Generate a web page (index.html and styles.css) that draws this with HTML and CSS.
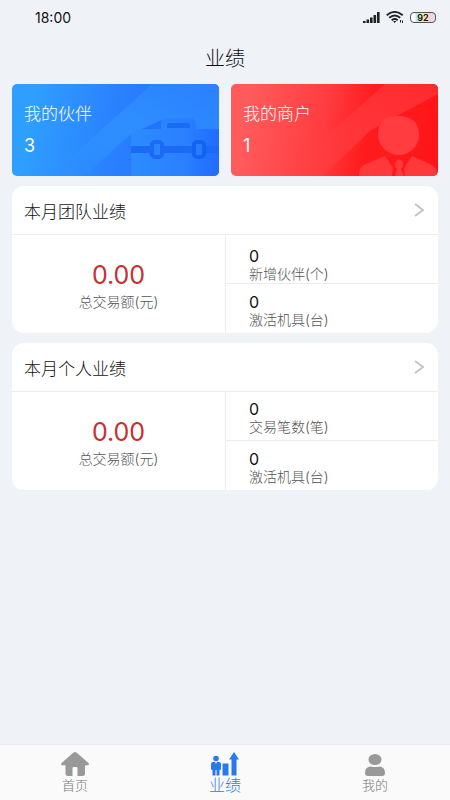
FILE: index.html
```html
<!DOCTYPE html>
<html lang="zh-CN">
<head>
    <meta charset="UTF-8">
    <meta name="viewport" content="width=device-width, initial-scale=1.0">
    <title>业绩</title>
    <link rel="stylesheet" href="styles.css">
</head>
<body>
    <div class="status-bar">
        <span class="time">18:00</span>
        <div class="status-icons">
            <svg width="17" height="11" viewBox="0 0 17 11" fill="#222">
                <rect x="0" y="9" width="2.6" height="2"/>
                <rect x="3.5" y="7.5" width="2.6" height="3.5"/>
                <rect x="7" y="5.5" width="2.6" height="5.5"/>
                <rect x="10.5" y="3" width="2.6" height="8"/>
                <rect x="14" y="0" width="2.6" height="11"/>
            </svg>
            <svg width="18" height="12" viewBox="0 0 18 12" fill="none" stroke="#222" stroke-width="1.8">
                <path d="M.7 4.2Q8.7-2.4 16.7 4.2"/>
                <path d="M3.2 6.8Q8.7 2.2 14.2 6.8"/>
                <path d="M5.7 9.2Q8.7 6.8 11.7 9.2"/>
                <path d="M7 10h3.4l-1.7 2z" fill="#222" stroke="none"/>
                <path d="M14.5 9v2.500M16.5 9.500v2.500" stroke-width="1"/>
            </svg>
            <div class="battery">92</div>
        </div>
    </div>

    <h1>业绩</h1>

    <main>
        <div class="cards">
            <a href="#" class="card card-blue">
                <svg class="card-art" viewBox="0 0 207 92" preserveAspectRatio="xMaxYMax slice">
                    <defs>
                        <linearGradient id="blue-band" x1="1" y1="0" x2="0" y2="1">
                            <stop offset="0" stop-color="#2a80ff"/>
                            <stop offset=".5" stop-color="#2f8eff"/>
                            <stop offset="1" stop-color="#2f9aff" stop-opacity="0"/>
                        </linearGradient>
                        <linearGradient id="case">
                            <stop offset="0" stop-color="#2c8cff"/>
                            <stop offset=".6" stop-color="#2a80ff"/>
                            <stop offset="1" stop-color="#206cff"/>
                        </linearGradient>
                    </defs>
                    <path d="M140 0H207V50H119L72 92H52V80z" fill="url(#blue-band)"/>
                    <path d="M130 45L152 35V45z" fill="#2173f8"/>
                    <path d="M119 92V53q0-8 8-8h22v-4q0-7 7-7h21q7 0 7 7v4h23v47z" fill="url(#case)"/>
                    <path d="M155 44v-3q0-2 2-2h18q3 0 3 3v2z" fill="#1b6cf5"/>
                    <path d="M119 62h88v7h-88z" fill="#1b6af5"/>
                    <rect x="140" y="58" width="10" height="15" rx="3" fill="#2c85ff" stroke="#1b6af5" stroke-width="4"/>
                    <rect x="182" y="58" width="10" height="15" rx="3" fill="#2a7cff" stroke="#1563f5" stroke-width="4"/>
                </svg>
                <span class="card-title">我的伙伴</span>
                <span class="card-count">3</span>
            </a>
            <a href="#" class="card card-red">
                <svg class="card-art" viewBox="0 0 207 92" preserveAspectRatio="xMaxYMax slice">
                    <defs>
                        <linearGradient id="red-band" x1="1" y1="0" x2="0" y2="1">
                            <stop offset="0" stop-color="#ff2a2d"/>
                            <stop offset=".5" stop-color="#ff3438"/>
                            <stop offset="1" stop-color="#ff4a4d" stop-opacity="0"/>
                        </linearGradient>
                    </defs>
                    <path d="M154 0H207V10L140 46L92 92H62V82z" fill="url(#red-band)"/>
                    <path d="M147 50c0-12 7-18 20-18s21 6 21 18c0 13-10 21-20 21s-21-8-21-21z" fill="#ff3c40"/>
                    <path d="M128 92v-3q0-6 7-9l19-8 8 12-1 8zM206 92v-3q0-6-7-9l-18-8-8 12 1 8z" fill="#ff383c"/>
                    <path d="M164 92l2-7q-4-4-1-8 3-3 6 0 3 4-1 8l3 7z" fill="#ff383c"/>
                </svg>
                <span class="card-title">我的商户</span>
                <span class="card-count">1</span>
            </a>
        </div>

        <section class="panel">
            <a href="#" class="panel-header">
                <h2>本月团队业绩</h2>
                <svg width="10" height="14" viewBox="0 0 10 14" fill="none" stroke="#c4c4c4" stroke-width="2"><path d="M1 1l8 6-8 6"/></svg>
            </a>
            <div class="panel-body">
                <div class="total">
                    <span class="amount">0.00</span>
                    <span class="label">总交易额(元)</span>
                </div>
                <div class="stats stats-team">
                    <div class="stat">
                        <span class="number">0</span>
                        <span class="label">新增伙伴(个)</span>
                    </div>
                    <div class="stat">
                        <span class="number">0</span>
                        <span class="label">激活机具(台)</span>
                    </div>
                </div>
            </div>
        </section>

        <section class="panel">
            <a href="#" class="panel-header">
                <h2>本月个人业绩</h2>
                <svg width="10" height="14" viewBox="0 0 10 14" fill="none" stroke="#c4c4c4" stroke-width="2"><path d="M1 1l8 6-8 6"/></svg>
            </a>
            <div class="panel-body">
                <div class="total">
                    <span class="amount">0.00</span>
                    <span class="label">总交易额(元)</span>
                </div>
                <div class="stats">
                    <div class="stat">
                        <span class="number">0</span>
                        <span class="label">交易笔数(笔)</span>
                    </div>
                    <div class="stat">
                        <span class="number">0</span>
                        <span class="label">激活机具(台)</span>
                    </div>
                </div>
            </div>
        </section>
    </main>

    <nav class="tab-bar">
        <a href="#" class="tab">
            <svg width="28" height="24" viewBox="0 0 28 24" fill="#999"><path d="M12.5.6q1.5-1.2 3 0L27.4 11q1.4 2-.8 2.3H24V21.5q0 2.5-2.5 2.5H16.500v-8q0-1-1-1h-3q-1 0-1 1v8H7q-2.5 0-2.5-2.5V13.3H1.4Q-.8 13 .6 11z"/></svg>
            <span>首页</span>
        </a>
        <a href="#" class="tab active">
            <svg width="28" height="24" viewBox="0 0 28 24" fill="#2878f0">
                <circle cx="5" cy="6.5" r="2.8"/>
                <path d="M2 10h2l1 2 1-2h2q2 0 2 2v5q0 1-1.5 1v5.5H5.500V18h-1v5.5h-3V18Q0 18 0 17v-5q0-2 2-2z"/>
                <path d="M11.5 11.5h6v12h-6zM20.5 7.5H18L23 0l5 7.5h-2.5v16h-5z"/>
            </svg>
            <span>业绩</span>
        </a>
        <a href="#" class="tab">
            <svg width="20" height="22" viewBox="0 0 20 22" fill="#999">
                <ellipse cx="10" cy="5.5" rx="6.5" ry="5.5"/>
                <path d="M0 19q0-6.5 6-6.5 4 1 8 0 6 0 6 6.5 0 3-3 3H3q-3 0-3-3z"/>
            </svg>
            <span>我的</span>
        </a>
    </nav>
</body>
</html>
```

FILE: styles.css
```css
* {
    box-sizing: border-box;
}
body {
    display: flex;
    flex-direction: column;
    min-height: 100vh;
    margin: 0;
    background-color: #eff3f8;
    color: #111;
    font-family: Inter, "Noto Sans CJK SC", sans-serif;
}
a {
    color: inherit;
    text-decoration: none;
}
.status-bar {
    display: flex;
    justify-content: space-between;
    align-items: center;
    height: 34px;
    padding: 0 14px 0 35px;
}
.time {
    font-size: 14px;
}
.status-icons {
    display: flex;
    align-items: center;
    gap: 6px;
}
.battery {
    width: 26px;
    height: 11px;
    border: 1px solid #555;
    border-radius: 4px;
    background: linear-gradient(90deg, #fff 15%, #a8e4fa 25%, #f5ef9c 50%, #f7cfd8 75%, #f3dce6);
    font-size: 9px;
    font-weight: 600;
    line-height: 9px;
    text-align: center;
}
h1 {
    margin: 0;
    font-size: 20px;
    font-weight: 300;
    line-height: 50px;
    text-align: center;
}
main {
    display: flex;
    flex: 1;
    flex-direction: column;
    gap: 10px;
    padding: 0 12px;
}
.cards {
    display: grid;
    grid-template-columns: 1fr 1fr;
    gap: 12px;
}
.card {
    position: relative;
    display: flex;
    flex-direction: column;
    gap: 8px;
    padding: 18px 12px;
    border-radius: 5px;
    overflow: hidden;
    color: #fff;
    line-height: 24px;
}
.card-blue {
    background: linear-gradient(100deg, #2f9fff 10%, #2a80ff 50%, #1f6bff);
}
.card-red {
    background: linear-gradient(100deg, #ff5a5c 10%, #ff3c3f 45%, #ff1c1e 65%, #ff1416);
}
.card-art {
    position: absolute;
    inset: 0;
    width: 100%;
    height: 100%;
}
.card-title {
    position: relative;
    font-size: 17px;
    font-weight: 300;
}
.card-count {
    position: relative;
    font-size: 18px;
}
.panel {
    border-radius: 12px;
    background-color: #fff;
}
.panel-header {
    display: flex;
    justify-content: space-between;
    align-items: center;
    height: 49px;
    padding: 0 14px 0 12px;
    border-bottom: 1px solid #ebedf0;
}
h2 {
    margin: 0;
    font-size: 17px;
    font-weight: 300;
}
.panel-body {
    display: grid;
    grid-template-columns: 1fr 1fr;
}
.total {
    display: flex;
    flex-direction: column;
    justify-content: center;
    align-items: center;
}
.amount {
    color: #c62f34;
    font-size: 25px;
    line-height: 36px;
}
.label {
    color: #555;
    font-size: 14px;
    font-weight: 300;
    line-height: 18px;
}
.stats {
    border-left: 1px solid #ebedf0;
}
.stat {
    display: flex;
    flex-direction: column;
    justify-content: center;
    height: 49px;
    padding: 5px 0 0 23px;
}
.stat:first-child {
    border-bottom: 1px solid #ebedf0;
}
.stats-team .stat:first-child {
    justify-content: flex-end;
}
.number {
    font-size: 16px;
    line-height: 17px;
}
.tab-bar {
    display: grid;
    grid-template-columns: repeat(3, 1fr);
    height: 56px;
    border-top: 1px solid #e8ebef;
    background-color: #fafafa;
}
.tab {
    display: flex;
    flex-direction: column;
    justify-content: flex-end;
    align-items: center;
    padding-bottom: 6px;
    color: #777;
    font-size: 13px;
    font-weight: 300;
    line-height: 18px;
}
.tab.active {
    color: #2878f0;
    font-size: 16px;
}
```
